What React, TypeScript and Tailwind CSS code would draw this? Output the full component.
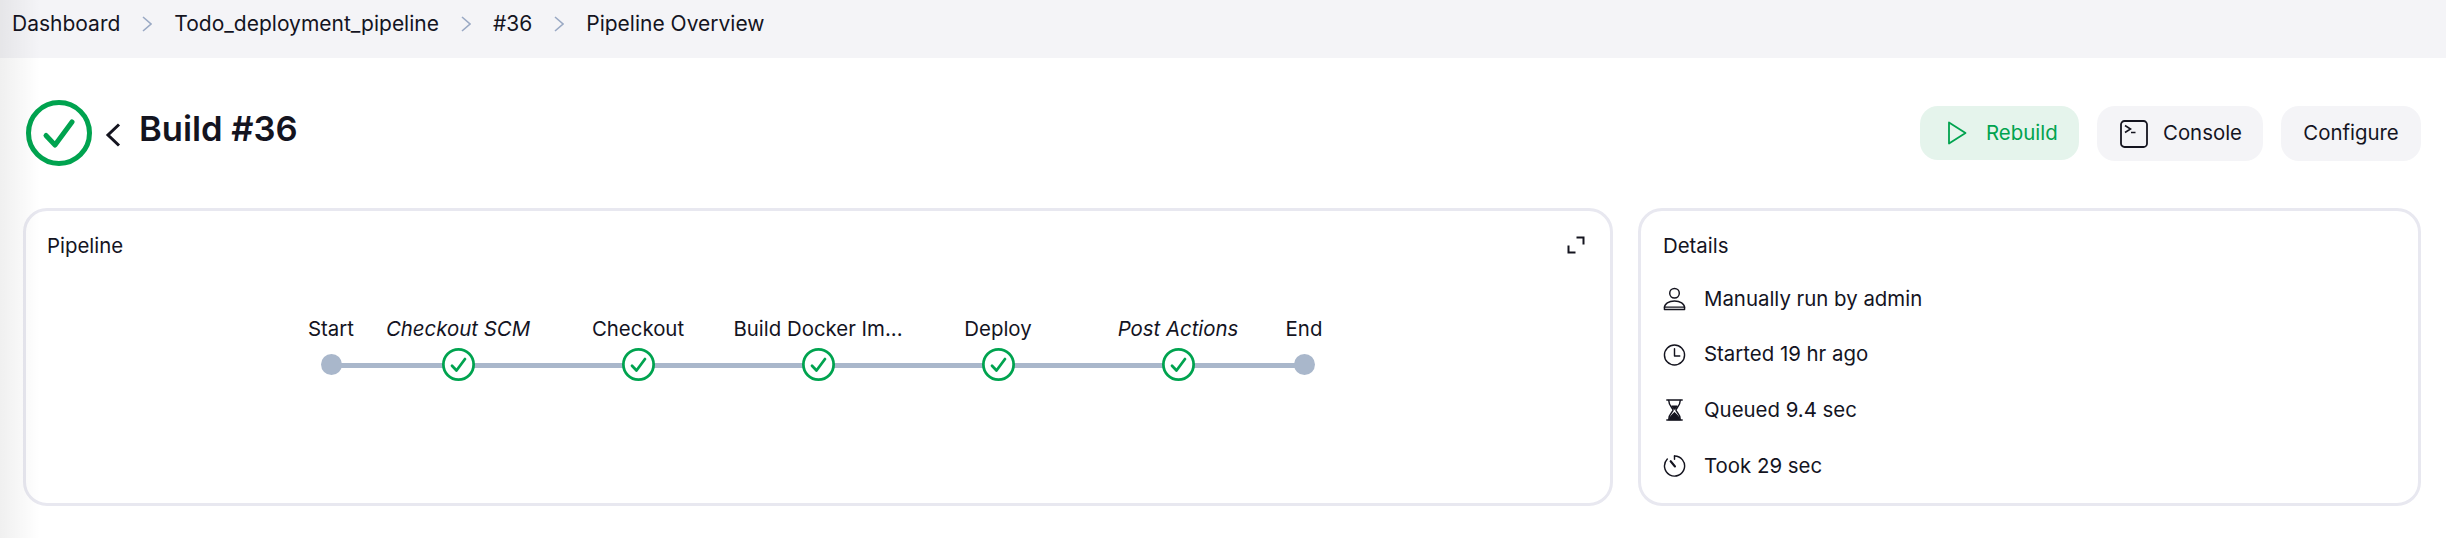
import React from 'react';

const GREEN = '#00a34f';

const CheckCircle: React.FC<{ size: number; stroke: number }> = ({ size, stroke }) => (
  <svg width={size} height={size} viewBox="0 0 66 66" fill="none" className="shrink-0">
    <circle cx="33" cy="33" r={33 - stroke / 2} stroke={GREEN} strokeWidth={stroke} fill="#fff" />
    <path
      d="M20 35.5 L29 45 L46 22"
      stroke={GREEN}
      strokeWidth={stroke}
      strokeLinecap="round"
      strokeLinejoin="round"
    />
  </svg>
);

const Crumb: React.FC = () => (
  <svg width="10" height="16" viewBox="0 0 10 16" fill="none" className="shrink-0">
    <path d="M1 1 L9 8 L1 15" stroke="#9aa9c4" strokeWidth="1.6" />
  </svg>
);

const iconProps = {
  width: 24,
  height: 24,
  viewBox: '0 0 24 24',
  fill: 'none',
  stroke: '#14141f',
  strokeWidth: 1.5,
  strokeLinecap: 'round' as const,
  strokeLinejoin: 'round' as const,
};

const PersonIcon = () => (
  <svg {...iconProps}>
    <circle cx="12" cy="6" r="5" />
    <path d="M1.500 23 v-2 c0-4 4.500-7 10.500-7 s10.500 3 10.500 7 v2 z" />
    <path d="M1.500 20.500 h21" />
  </svg>
);

const ClockIcon = () => (
  <svg {...iconProps}>
    <circle cx="12" cy="12" r="10.500" />
    <path d="M12 5.500 V13 H17.500" />
  </svg>
);

const HourglassIcon = () => (
  <svg {...iconProps}>
    <path d="M4 1.500 H20 M4 22.500 H20" strokeWidth="1.600" />
    <path d="M6 2 C6 8 10.500 10 10.500 12 C10.500 14 6 16 6 22 H18 C18 16 13.500 14 13.500 12 C13.500 10 18 8 18 2" />
    <path d="M7 21.500 C7.500 18 11 16.500 12 15 C13 16.500 16.500 18 17 21.500 Z" fill="#14141f" />
    <path d="M9.500 8 H14.500 L12 11 Z" fill="#14141f" />
  </svg>
);

const TimerIcon = () => (
  <svg {...iconProps}>
    <path d="M12 1.500 A10.500 10.500 0 1 1 4.500 4.700" />
    <path d="M8 7 L12.500 12.500" strokeWidth="2.200" />
    <path d="M12 1.500 V5" />
  </svg>
);

const PIPELINE_NODES = [
  { name: 'Start', italic: false, kind: 'dot', width: 'w-[74px]' },
  { name: 'Checkout SCM', italic: true, kind: 'check', width: 'w-[180px]' },
  { name: 'Checkout', italic: false, kind: 'check', width: 'w-[180px]' },
  { name: 'Build Docker Im...', italic: false, kind: 'check', width: 'w-[180px]' },
  { name: 'Deploy', italic: false, kind: 'check', width: 'w-[180px]' },
  { name: 'Post Actions', italic: true, kind: 'check', width: 'w-[180px]' },
  { name: 'End', italic: false, kind: 'dot', width: 'w-[72px]' },
];

const DETAILS = [
  { text: 'Manually run by admin', icon: <PersonIcon /> },
  { text: 'Started 19 hr ago', icon: <ClockIcon /> },
  { text: 'Queued 9.4 sec', icon: <HourglassIcon /> },
  { text: 'Took 29 sec', icon: <TimerIcon /> },
];

const App: React.FC = () => {
  return (
    <div className="relative h-[538px] w-[2446px] overflow-hidden bg-white font-['Inter',sans-serif] text-[20.4px] text-[#14141f]">
      {/* breadcrumb */}
      <div className="flex h-[58px] items-center gap-[22px] bg-[#f4f4f7] pb-[10px] pl-[12px] text-[21px]">
        <span>Dashboard</span>
        <Crumb />
        <span>Todo_deployment_pipeline</span>
        <Crumb />
        <span>#36</span>
        <Crumb />
        <span>Pipeline Overview</span>
      </div>

      {/* header */}
      <div className="flex h-[150px] items-start justify-between pl-[26px] pr-[25px]">
        <div className="mt-[42px] flex items-center">
          <CheckCircle size={66} stroke={5} />
          <svg width="16" height="24" viewBox="0 0 16 24" fill="none" className="ml-[13px] mt-[4px]">
            <path d="M14 1.500 L3 12 L14 22.500" stroke="#14141f" strokeWidth="3" />
          </svg>
          <h1 className="mb-[9px] ml-[18px] text-[34.6px] font-semibold leading-none">Build #36</h1>
        </div>
        <div className="mt-[48px] flex items-start gap-[18px]">
          <button className="flex h-[54px] w-[159px] items-center rounded-[18px] bg-[#e5f4ec] pl-[27px] text-[#00a34f]">
            <svg width="20" height="24" viewBox="0 0 20 24" fill="none" className="shrink-0">
              <path
                d="M2 1.500 L18.500 12 L2 22.500 Z"
                stroke="#00a34f"
                strokeWidth="1.800"
                strokeLinejoin="round"
              />
            </svg>
            <span className="ml-[19px]">Rebuild</span>
          </button>
          <button className="flex h-[55px] w-[166px] items-center rounded-[18px] bg-[#f4f4f7] pl-[23px]">
            <svg width="28" height="28" viewBox="0 0 28 28" fill="none" className="shrink-0">
              <rect x="1" y="1" width="26" height="26" rx="3.500" stroke="#14141f" strokeWidth="1.800" />
              <path d="M5 5.500 L10.500 9 L5 12.500 M11 12.500 H15.500" stroke="#14141f" strokeWidth="1.600" />
            </svg>
            <span className="ml-[15px]">Console</span>
          </button>
          <button className="flex h-[55px] w-[140px] items-center justify-center rounded-[18px] bg-[#f4f4f7]">
            Configure
          </button>
        </div>
      </div>

      {/* cards */}
      <div className="flex gap-[25px] pl-[23px] pr-[25px]">
        <section className="flex h-[298px] w-[1590px] flex-col rounded-[24px] border-[3px] border-[#e8e8f0] bg-white pl-[21px] pr-[24px]">
          <div className="mt-[21px] flex items-center justify-between">
            <span className="leading-[28px]">Pipeline</span>
            <svg width="18" height="18" viewBox="0 0 18 18" fill="none" className="mr-[1px] mt-[-2px]">
              <path
                d="M1.500 9.500 V16.500 H8.500 M9.500 1.500 H16.500 V8.500"
                stroke="#14141f"
                strokeWidth="2"
              />
            </svg>
          </div>
          <div className="relative ml-[247px] mt-[55px] flex w-fit">
            <div className="absolute left-[37px] right-[36px] top-[48px] h-[5px] bg-[#a9b7cb]" />
            {PIPELINE_NODES.map(node => (
              <div key={node.name} className={`relative flex flex-col items-center ${node.width}`}>
                <span className={`whitespace-nowrap leading-[28px] ${node.italic ? 'italic' : ''}`}>
                  {node.name}
                </span>
                <div className="mt-[5px] flex h-[33px] items-center">
                  {node.kind === 'check' ? (
                    <CheckCircle size={33} stroke={5.500} />
                  ) : (
                    <div className="h-[21px] w-[21px] rounded-full bg-[#a9b7cb]" />
                  )}
                </div>
              </div>
            ))}
          </div>
        </section>

        <section className="flex h-[298px] w-[783px] flex-col rounded-[24px] border-[3px] border-[#e8e8f0] bg-white pl-[22px]">
          <span className="mt-[21px] leading-[28px]">Details</span>
          <ul className="mt-[25px] flex flex-col gap-[27.700px]">
            {DETAILS.map(row => (
              <li key={row.text} className="flex h-[28px] items-center gap-[18px]">
                <span className="flex w-[23px] justify-center">{row.icon}</span>
                <span>{row.text}</span>
              </li>
            ))}
          </ul>
        </section>
      </div>

      {/* soft shadow along the left edge */}
      <div className="pointer-events-none absolute inset-y-0 left-0 w-[40px] bg-gradient-to-r from-black/[0.06] to-transparent" />
    </div>
  );
};

export default App;
